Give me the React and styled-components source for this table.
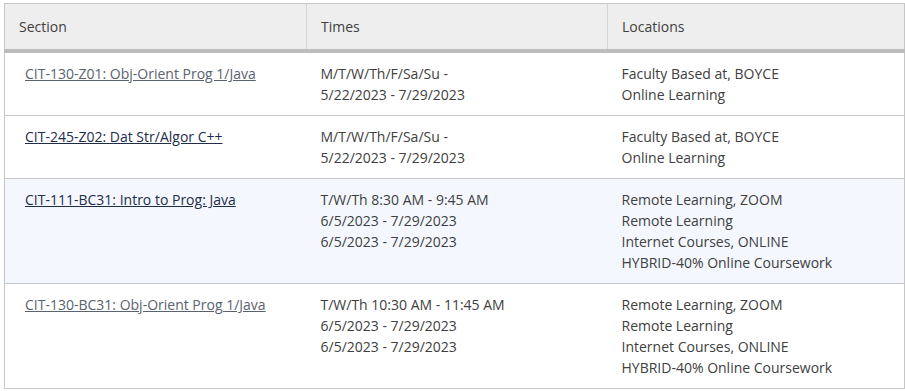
import styled, { createGlobalStyle } from 'styled-components'

const GlobalStyle = createGlobalStyle`
    body {
        margin: 0;
        padding: 3px 0 0 4px;
        background: #ffffff;
        font-family: "Open Sans", "Liberation Sans", sans-serif;
    }
`

const Table = styled.table`
    width: 901px;
    border-collapse: collapse;
    table-layout: fixed;
    border: 1px solid #c6c6c6;
    font-size: 14px;
    line-height: 21px;
    color: #404040;
`

const HeadCell = styled.th`
    background: #eeeeee;
    text-align: left;
    font-weight: 400;
    color: #404040;
    padding: 12px 14px;
    border-top: 1px solid #c6c6c6;
    border-right: 1px solid #d6d6d6;
    border-bottom: 4px solid #bdbdbd;
    &:last-child {
        border-right: 1px solid #c6c6c6;
    }
`

const Row = styled.tr`
    background: ${({ $highlight }) => ($highlight ? '#f4f8fe' : '#ffffff')};
    border-bottom: 1px solid #c8c8c8;
`

const Cell = styled.td`
    vertical-align: top;
    padding: 10px 14px;
    &:first-child {
        padding-left: 20px;
    }
`

const SectionLink = styled.a`
    color: ${({ $visited }) => ($visited ? '#5a6270' : '#1d2d4b')};
    text-decoration: underline;
    cursor: pointer;
`

const Line = styled.div`
    white-space: nowrap;
`

const sections = [
    {
        name: 'CIT-130-Z01: Obj-Orient Prog 1/Java',
        visited: true,
        times: ['M/T/W/Th/F/Sa/Su -', '5/22/2023 - 7/29/2023'],
        locations: ['Faculty Based at, BOYCE', 'Online Learning'],
    },
    {
        name: 'CIT-245-Z02: Dat Str/Algor C++',
        times: ['M/T/W/Th/F/Sa/Su -', '5/22/2023 - 7/29/2023'],
        locations: ['Faculty Based at, BOYCE', 'Online Learning'],
    },
    {
        name: 'CIT-111-BC31: Intro to Prog: Java',
        highlight: true,
        times: ['T/W/Th 8:30 AM - 9:45 AM', '6/5/2023 - 7/29/2023', '6/5/2023 - 7/29/2023'],
        locations: ['Remote Learning, ZOOM', 'Remote Learning', 'Internet Courses, ONLINE', 'HYBRID-40% Online Coursework'],
    },
    {
        name: 'CIT-130-BC31: Obj-Orient Prog 1/Java',
        visited: true,
        times: ['T/W/Th 10:30 AM - 11:45 AM', '6/5/2023 - 7/29/2023', '6/5/2023 - 7/29/2023'],
        locations: ['Remote Learning, ZOOM', 'Remote Learning', 'Internet Courses, ONLINE', 'HYBRID-40% Online Coursework'],
    },
]

function App() {
    return (
        <>
            <GlobalStyle />
            <Table>
                <colgroup>
                    <col style={{ width: 302 }} />
                    <col style={{ width: 301 }} />
                    <col />
                </colgroup>
                <thead>
                    <tr>
                        <HeadCell>Section</HeadCell>
                        <HeadCell>Times</HeadCell>
                        <HeadCell>Locations</HeadCell>
                    </tr>
                </thead>
                <tbody>
                    {sections.map((section, index) => (
                        <Row key={`${section.name}-${index}`} $highlight={section.highlight}>
                            <Cell>
                                <SectionLink $visited={section.visited}>{section.name}</SectionLink>
                            </Cell>
                            <Cell>
                                {section.times.map((time, i) => (
                                    <Line key={i}>{time}</Line>
                                ))}
                            </Cell>
                            <Cell>
                                {section.locations.map((location, i) => (
                                    <Line key={i}>{location}</Line>
                                ))}
                            </Cell>
                        </Row>
                    ))}
                </tbody>
            </Table>
        </>
    )
}

export default App
